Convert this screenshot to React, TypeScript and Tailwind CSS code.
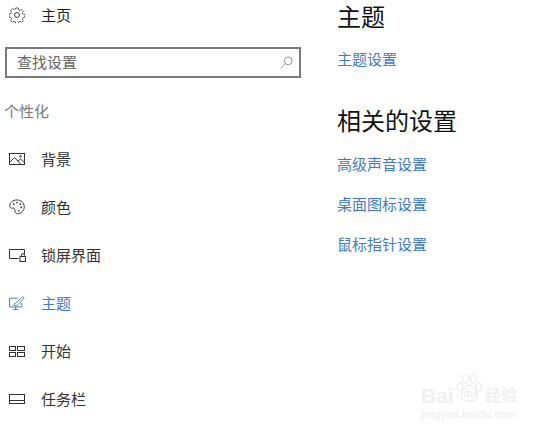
import React from 'react';

const font = '[font-family:"Noto_Sans_CJK_SC","Liberation_Sans",sans-serif]';

const HomeIcon = () => (
    <svg width="16" height="16" viewBox="0 0 17 17" fill="none" stroke="#333" strokeWidth="1">
        <circle cx="8.5" cy="8.5" r="2.6" />
        <path d="M7.2 1h2.6l.4 2 1.5.7 1.8-1.1 1.8 1.8-1.1 1.8.7 1.5 2 .4v2.6l-2 .4-.7 1.5 1.1 1.8-1.8 1.8-1.8-1.1-1.5.7-.4 2H7.2l-.4-2-1.5-.7-1.8 1.1-1.8-1.8 1.1-1.8-.7-1.5-2-.4V7.2l2-.4.7-1.5-1.1-1.8 1.8-1.8 1.8 1.1 1.5-.7z" strokeDasharray="2 0.6" />
    </svg>
);

const BackgroundIcon = () => (
    <svg width="16" height="12" viewBox="0 0 16 12" fill="none" stroke="#333" strokeWidth="1">
        <rect x="0.5" y="0.5" width="15" height="11" />
        <path d="M1 9l4.500-4.500 6.500 7M9 8l2.500-2 4 3.500" />
        <circle cx="11.500" cy="3.300" r="0.8" />
    </svg>
);

const ColorIcon = () => (
    <svg width="16" height="16" viewBox="0 0 17 17" fill="none" stroke="#333" strokeWidth="1">
        <path d="M8.5 1C4 1 .8 3.800.8 7.500c0 2 1.700 2.400 3 2.200 1.500-.2 2.700.5 2.500 2-.2 1.700.5 4 2.500 4 4 0 7.400-3.200 7.400-7.300C16.200 4.200 13 1 8.500 1z" />
        <circle cx="5" cy="5.500" r="0.9" fill="#333" stroke="none" />
        <circle cx="8.500" cy="3.800" r="0.9" fill="#333" stroke="none" />
        <circle cx="12" cy="5.500" r="0.9" fill="#333" stroke="none" />
        <circle cx="13" cy="9" r="0.9" fill="#333" stroke="none" />
        <circle cx="10.500" cy="12.500" r="0.9" fill="#333" stroke="none" />
    </svg>
);

const LockIcon = () => (
    <svg width="17" height="13" viewBox="0 0 17 13" fill="none" stroke="#333" strokeWidth="1">
        <path d="M9.500 9.500H.5V.5h15v5" />
        <rect x="11" y="7.500" width="5.500" height="5" />
        <path d="M12.300 7.500V6a1.500 1.500 0 013 0v1.500" />
    </svg>
);

const ThemeIcon = () => (
    <svg width="16" height="14" viewBox="0 0 18 16" fill="none" stroke="#3f7cc0" strokeWidth="1.100">
        <path d="M10 2.500H.5v10h14V8M4.500 15.500h6M7.500 12.500v3" />
        <path d="M5.500 10.500c0-1.500.7-2.500 2-2.500L15.500.8l1.700 1.700L10 10c-.5 1-2.500 1-4.500.5z" />
    </svg>
);

const StartIcon = () => (
    <svg width="16" height="11" viewBox="0 0 16 11" fill="none" stroke="#333" strokeWidth="1">
        <rect x="0.500" y="0.500" width="6" height="4" />
        <rect x="8.500" y="0.500" width="7" height="4" />
        <rect x="0.500" y="6.500" width="6" height="4" />
        <rect x="8.500" y="6.500" width="7" height="4" />
    </svg>
);

const TaskbarIcon = () => (
    <svg width="16" height="10" viewBox="0 0 16 10" fill="none" stroke="#333" strokeWidth="1">
        <rect x="0.500" y="0.500" width="15" height="9" />
        <path d="M1 6.500h14" />
    </svg>
);

const SearchIcon = () => (
    <svg width="13" height="13" viewBox="0 0 14 14" fill="none" stroke="#8a8a8a" strokeWidth="1">
        <circle cx="8.800" cy="5.200" r="4.200" />
        <path d="M5.800 8.200L.8 13.200" />
    </svg>
);

const Watermark = () => (
    <div className="absolute left-[421px] top-[373px] w-[100px] h-[48px] text-[#f0f0f0] select-none">
        <svg className="absolute left-[34px] top-0" width="29" height="30" viewBox="0 0 29 30" fill="none" stroke="#e8e8e8" strokeWidth="1">
            <ellipse cx="5" cy="14" rx="3" ry="4" />
            <ellipse cx="10.500" cy="5.500" rx="3" ry="4.500" />
            <ellipse cx="18.500" cy="5.500" rx="3" ry="4.500" />
            <ellipse cx="24" cy="14" rx="3" ry="4" />
            <path d="M14.500 12c-4 0-10 9-7.500 14 2.500 3 12 3 15 0 2.500-5-3.500-14-7.500-14z" />
        </svg>
        <span className="absolute left-[42px] top-[15px] text-[11px] leading-none font-bold [font-family:'Liberation_Sans',sans-serif]">du</span>
        <span className="absolute left-0 top-[12px] text-[21px] leading-none font-bold [font-family:'Liberation_Sans',sans-serif]">Bai</span>
        <span className="absolute left-[64px] top-[13px] text-[16px] leading-none font-bold">经验</span>
        <span className="absolute left-0 top-[36px] text-[10.500px] leading-none font-bold tracking-[0.2px] whitespace-nowrap [font-family:'Liberation_Sans',sans-serif]">jingyan.baidu.com</span>
    </div>
);

const navItems = [
    { label: '背景', icon: <BackgroundIcon /> },
    { label: '颜色', icon: <ColorIcon /> },
    { label: '锁屏界面', icon: <LockIcon /> },
    { label: '主题', icon: <ThemeIcon />, active: true },
    { label: '开始', icon: <StartIcon /> },
    { label: '任务栏', icon: <TaskbarIcon /> },
];

const relatedLinks = ['高级声音设置', '桌面图标设置', '鼠标指针设置'];

const App: React.FC = () => {
    return (
        <div className={`relative w-[549px] h-[432px] overflow-hidden bg-white flex ${font}`}>
            <aside className="w-[337px] flex-shrink-0 flex flex-col">
                <div className="h-[30px] flex items-center text-[15px] text-[#222]">
                    <span className="w-[41px] pl-[9px] flex-shrink-0"><HomeIcon /></span>
                    主页
                </div>
                <div className="ml-[5px] mt-[17px] w-[296px] h-[31px] border-2 border-[#7a7a7a] flex items-center justify-between pl-[10px] pr-[6px]">
                    <span className="text-[15px] text-[#666]">查找设置</span>
                    <SearchIcon />
                </div>
                <div className="ml-[4px] mt-[22px] h-[21px] leading-[21px] text-[15px] text-[#777]">个性化</div>
                <nav className="mt-[14px] flex flex-col">
                    {navItems.map((item) => (
                        <div
                            key={item.label}
                            className={`h-[48px] flex items-center text-[15px] ${item.active ? 'text-[#3f7cc0]' : 'text-[#333]'}`}
                        >
                            <span className="w-[41px] pl-[9px] flex-shrink-0">{item.icon}</span>
                            {item.label}
                        </div>
                    ))}
                </nav>
            </aside>

            <main className="flex-1 flex flex-col">
                <h2 className="h-[32px] leading-[32px] text-[24px] text-[#111]">主题</h2>
                <a className="mt-[17px] h-[20px] leading-[20px] text-[15px] text-[#3f7cc0]">主题设置</a>
                <h2 className="mt-[34px] h-[34px] leading-[34px] text-[24px] text-[#111]">相关的设置</h2>
                <div className="mt-[17px] flex flex-col gap-[20px]">
                    {relatedLinks.map((link) => (
                        <a key={link} className="h-[20px] leading-[20px] text-[15px] text-[#3f7cc0]">{link}</a>
                    ))}
                </div>
            </main>

            <Watermark />
        </div>
    );
};

export default App;
